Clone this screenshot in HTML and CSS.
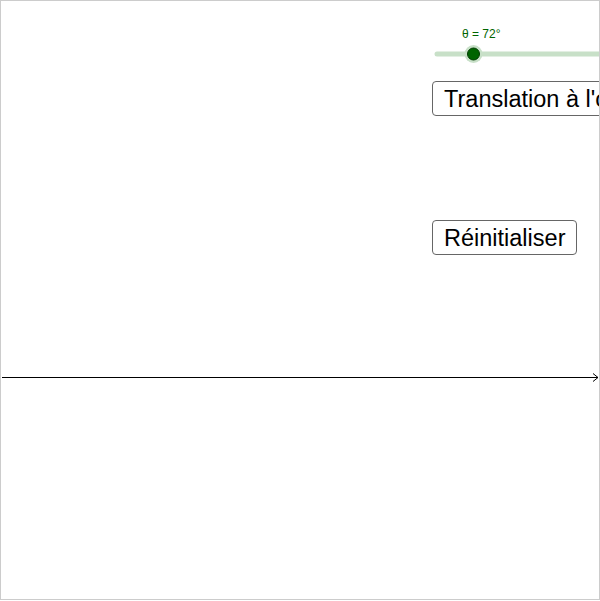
FILE: index.html
```html
<!DOCTYPE html>
<html>
<head>
<meta charset="utf-8">
<link rel="stylesheet" href="styles.css">
</head>
<body>
<div class="applet">
  <svg class="axis" width="600" height="600" viewBox="0 0 600 600">
    <line x1="2" y1="377.5" x2="598" y2="377.5" stroke="#000" stroke-width="1"/>
    <polyline points="593,373.5 598,377.5 593,381.5" fill="none" stroke="#000" stroke-width="1"/>
    <line x1="437" y1="54" x2="610" y2="54" stroke="#c8e0c8" stroke-width="5" stroke-linecap="round"/>
    <circle cx="473.5" cy="54" r="9" fill="#c8e0c8"/>
    <circle cx="473.5" cy="54" r="6" fill="#006400" stroke="#003c00" stroke-width="1"/>
  </svg>
  <div class="slider-label">θ = 72°</div>
  <button class="btn btn-translate">Translation à l'origine</button>
  <button class="btn btn-reset">Réinitialiser</button>
</div>
</body>
</html>
```

FILE: styles.css
```css
html, body {
  margin: 0;
  padding: 0;
  background: #fff;
}
.applet {
  position: relative;
  width: 600px;
  height: 600px;
  box-sizing: border-box;
  border: 1px solid #cccccc;
  overflow: hidden;
  font-family: "Liberation Sans", Arial, sans-serif;
}
.axis {
  position: absolute;
  left: -1px;
  top: -1px;
}
.slider-label {
  position: absolute;
  left: 461px;
  top: 26px;
  font-size: 12px;
  color: #006400;
  white-space: nowrap;
}
.btn {
  position: absolute;
  left: 431px;
  height: 35px;
  box-sizing: border-box;
  background: #fff;
  border: 1px solid #666;
  border-radius: 4px;
  font-family: "Liberation Sans", Arial, sans-serif;
  font-size: 23.5px;
  color: #000;
  padding: 1px 11px 0;
  white-space: nowrap;
  line-height: 32px;
}
.btn-translate {
  top: 80px;
}
.btn-reset {
  top: 219px;
}
```
